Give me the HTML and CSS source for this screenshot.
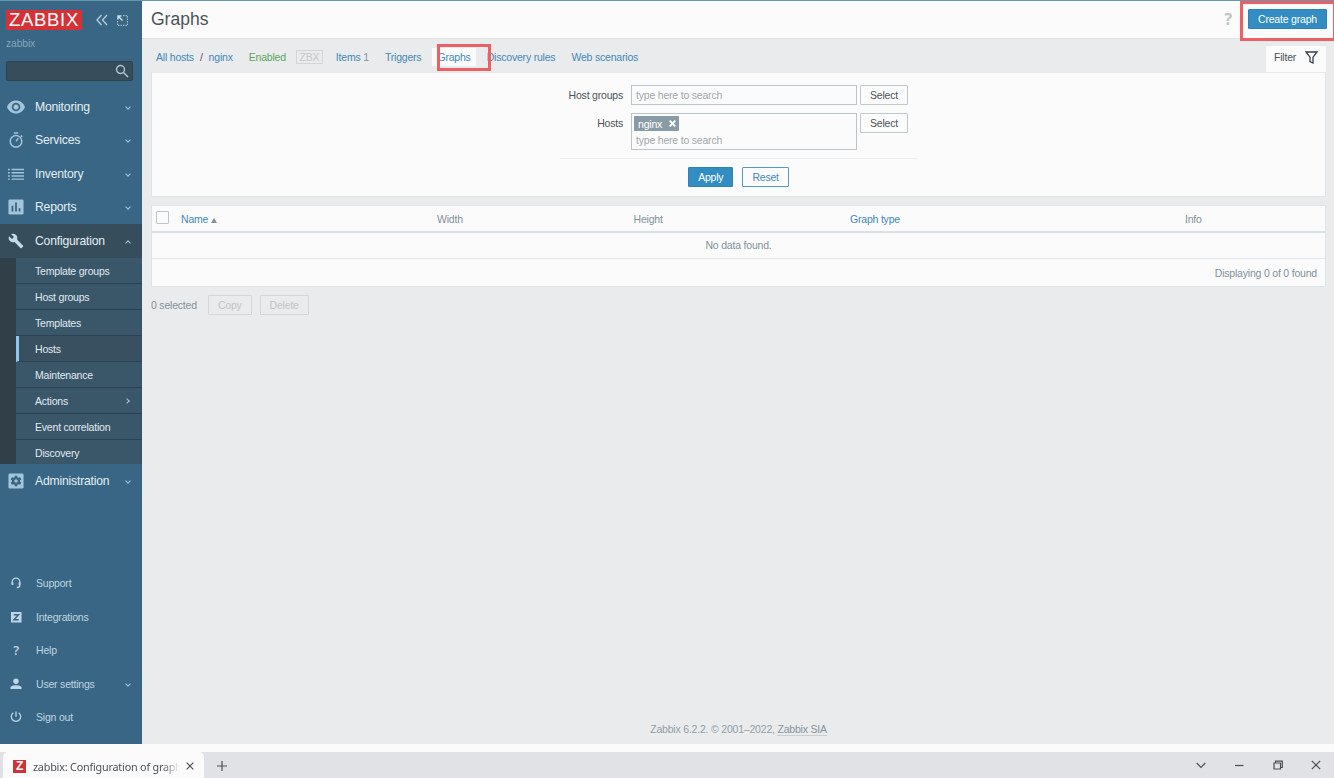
FILE: index.html
```
<!DOCTYPE html>
<html lang="en">

<head>
    <meta charset="utf-8">
    <title>zabbix: Configuration of graphs</title>
    <link rel="stylesheet" href="styles.css">
</head>

<body>
    <div class="window">
        <aside class="sidebar">
            <div class="brand">
                <div class="logo"><span>ZABBIX</span></div>
                <svg class="collapse" width="12" height="12" viewBox="0 0 12 12"><path d="M5.500 1L1 6l4.500 5M11 1L6.500 6l4.500 5"/></svg>
                <svg class="kiosk" width="11" height="11" viewBox="0 0 11 11">
                    <path class="dots" d="M6 .5h4.500v10H.500V6"/>
                    <path d="M1 4.500V1h3.500M1 1l4.500 4.500"/>
                </svg>
            </div>
            <div class="server">zabbix</div>
            <div class="search">
                <svg width="14" height="14" viewBox="0 0 14 14"><circle cx="5.500" cy="5.500" r="4"/><path d="M8.500 8.500l4.500 4.500"/></svg>
            </div>

            <nav class="menu">
                <a class="item">
                    <svg class="icon eye" viewBox="0 0 18 18"><path fill-rule="evenodd" d="M9 2.500C5 2.500 1.500 5 0 9c1.500 4 5 6.500 9 6.500s7.500-2.500 9-6.500c-1.500-4-5-6.500-9-6.500zM9 13.300a4.300 4.300 0 1 1 0-8.600 4.300 4.300 0 0 1 0 8.600z"/><circle cx="9" cy="9" r="2.500"/></svg>
                    <span>Monitoring</span><i class="arrow"></i>
                </a>
                <a class="item">
                    <svg class="icon line" viewBox="0 0 18 18"><circle cx="9" cy="10.500" r="6.500"/><path d="M6.500 1.200h5M9 10.500l2.500-3.500M14.500 4l1.500 1.500"/></svg>
                    <span>Services</span><i class="arrow"></i>
                </a>
                <a class="item">
                    <svg class="icon" viewBox="0 0 18 18"><path d="M0 3h2v1.800H0zM4 3h14v1.800H4zM0 6.700h2v1.800H0zM4 6.700h14v1.800H4zM0 10.400h2v1.800H0zM4 10.400h14v1.800H4zM0 14h2v1.500H0zM4 14h14v1.500H4z"/></svg>
                    <span>Inventory</span><i class="arrow"></i>
                </a>
                <a class="item">
                    <svg class="icon" viewBox="0 0 18 18"><rect x=".5" y=".5" width="17" height="17" rx="1.500"/><path class="cut" d="M4 7.500h2V14H4zM8 4h2v10H8zM12 10.500h2V14h-2z"/></svg>
                    <span>Reports</span><i class="arrow"></i>
                </a>
                <a class="item open">
                    <svg class="icon" viewBox="0 0 24 24"><path d="M22.700 19l-9.100-9.100c.9-2.300.4-5-1.500-6.900-2-2-5-2.400-7.400-1.300L9 6 6 9 1.600 4.700C.4 7.100.9 10.100 2.900 12.100c1.900 1.900 4.600 2.400 6.900 1.500l9.100 9.100c.4.4 1 .4 1.400 0l2.300-2.300c.5-.4.5-1.100.1-1.400z"/></svg>
                    <span>Configuration</span><i class="arrow up"></i>
                </a>
                <div class="submenu">
                    <a>Template groups</a>
                    <a>Host groups</a>
                    <a>Templates</a>
                    <a class="current">Hosts</a>
                    <a>Maintenance</a>
                    <a>Actions<i class="arrow right"></i></a>
                    <a>Event correlation</a>
                    <a>Discovery</a>
                </div>
                <a class="item">
                    <svg class="icon" viewBox="0 0 18 18"><rect x=".5" y=".5" width="17" height="17" rx="1.500"/><path class="cut" d="M7.700 3h2.600l.4 1.800 1.100.6 1.800-.6 1.300 2.200-1.400 1.300v1.400l1.400 1.300-1.300 2.200-1.800-.6-1.100.6-.4 1.800H7.700l-.4-1.800-1.100-.6-1.800.6L3.100 11l1.400-1.300V8.300L3.100 7l1.300-2.200 1.800.6 1.100-.6z"/><circle cx="9" cy="9" r="1.900"/></svg>
                    <span>Administration</span><i class="arrow"></i>
                </a>
            </nav>

            <nav class="menu user">
                <a class="item">
                    <svg class="icon line" viewBox="0 0 12 12"><path d="M2.200 7V5a3.800 3.800 0 0 1 7.600 0v3.500c0 1.300-1 2-3 2"/><path class="thick" d="M2.500 5.500v2.500M9.500 5.500v2.500"/></svg>
                    <span>Support</span>
                </a>
                <a class="item">
                    <svg class="icon" viewBox="0 0 12 12"><rect x="1" y="1" width="10.500" height="10.500"/><path class="zed" d="M3.800 3.700h4.700L4 8.800h4.700"/></svg>
                    <span>Integrations</span>
                </a>
                <a class="item"><b class="icon">?</b><span>Help</span></a>
                <a class="item">
                    <svg class="icon" viewBox="0 0 12 12"><circle cx="6" cy="3.300" r="2.700"/><path d="M.5 11V9.500C.5 8 3.500 7.200 6 7.200s5.500.8 5.500 2.300V11z"/></svg>
                    <span>User settings</span><i class="arrow"></i>
                </a>
                <a class="item">
                    <svg class="icon line" viewBox="0 0 12 12"><path d="M6 .5v5.300M3.300 1.800a4.700 4.700 0 1 0 5.400 0"/></svg>
                    <span>Sign out</span>
                </a>
            </nav>
        </aside>

        <main class="page">
            <header class="header">
                <h1>Graphs</h1>
                <span class="help">?</span>
                <button class="btn primary create">Create graph</button>
            </header>

            <div class="tabs">
                <a>All hosts</a><span class="slash">/</span><a class="host">nginx</a>
                <span class="enabled">Enabled</span>
                <span class="zbx">ZBX</span>
                <a class="items">Items <sup>1</sup></a>
                <a class="triggers">Triggers</a>
                <a class="graphs">Graphs</a>
                <a class="discovery">Discovery rules</a>
                <a>Web scenarios</a>
                <div class="filter-tab">Filter
                    <svg width="13" height="13" viewBox="0 0 13 13"><path d="M1 1h11L8 6.200V12L5 10.500V6.200z"/></svg>
                </div>
            </div>

            <section class="filter">
                <div class="row">
                    <label>Host groups</label>
                    <div class="field"><span class="hint">type here to search</span></div>
                    <button class="btn select">Select</button>
                </div>
                <div class="row">
                    <label>Hosts</label>
                    <div class="field multi">
                        <span class="tag">nginx<svg width="7" height="7" viewBox="0 0 7 7"><path d="M.7.7l5.600 5.600M6.300.7L.7 6.300"/></svg></span>
                        <span class="hint">type here to search</span>
                    </div>
                    <button class="btn select">Select</button>
                </div>
                <div class="actions">
                    <button class="btn primary">Apply</button>
                    <button class="btn outline">Reset</button>
                </div>
            </section>

            <section class="table">
                <div class="thead">
                    <span class="checkbox"></span>
                    <a>Name <i class="sort"></i></a>
                    <span>Width</span>
                    <span>Height</span>
                    <a>Graph type</a>
                    <span>Info</span>
                </div>
                <div class="nodata">No data found.</div>
                <div class="total">Displaying 0 of 0 found</div>
            </section>

            <div class="bulk">
                <span>0 selected</span>
                <button class="btn disabled">Copy</button>
                <button class="btn disabled">Delete</button>
            </div>

            <footer>Zabbix 6.2.2. © 2001–2022, <a>Zabbix SIA</a></footer>
        </main>
        <div class="mark mark-graphs"></div>
        <div class="mark mark-create"></div>
    </div>

    <div class="browser">
        <div class="browser-tab">
            <span class="favicon">Z</span>
            <span class="title">zabbix: Configuration of graph</span>
            <svg width="8" height="8" viewBox="0 0 8 8"><path d="M.7.7l6.600 6.600M7.300.7L.7 7.300"/></svg>
        </div>
        <svg class="plus" width="10" height="10" viewBox="0 0 10 10"><path d="M5 0v10M0 5h10"/></svg>
        <div class="controls">
            <svg width="10" height="10" viewBox="0 0 10 10"><path d="M.7 3L5 7.300 9.300 3"/></svg>
            <svg width="10" height="10" viewBox="0 0 10 10"><path d="M1 5.500h8.500"/></svg>
            <svg width="10" height="10" viewBox="0 0 10 10"><path d="M1 3h6.500v6H1zM2.500 3V1.200h6.800v6.300H7.500"/></svg>
            <svg width="10" height="10" viewBox="0 0 10 10"><path d="M.8.8l8.400 8.400M9.200.8L.8 9.200"/></svg>
        </div>
    </div>
</body>

</html>
```

FILE: styles.css
```
* {
    box-sizing: border-box;
}

body {
    margin: 0;
    width: 1334px;
    height: 778px;
    overflow: hidden;
    background: #fbfbfb;
    font-family: "Liberation Sans", Arial, sans-serif;
    font-size: 10.5px;
    letter-spacing: -0.2px;
    color: #4b5359;
}

svg {
    display: block;
    flex: none;
    fill: none;
}

a {
    color: #4289b8;
}

.window {
    position: relative;
    display: flex;
    height: 744px;
    border-top: 1px solid #6498b0;
}

/* sidebar */
.sidebar {
    display: flex;
    flex-direction: column;
    flex: none;
    width: 142px;
    padding-top: 9px;
    background: #396684;
}

.brand {
    display: flex;
    align-items: center;
    height: 20px;
    padding-left: 6px;
}

.logo {
    display: flex;
    align-items: center;
    justify-content: center;
    width: 76px;
    height: 20px;
    background: #d63137;
    color: #fff;
    font-size: 18.5px;
    letter-spacing: .7px;
}

.collapse {
    margin-left: 14px;
    stroke: #b5cfe0;
    stroke-width: 1.3;
}

.kiosk {
    margin-left: 9px;
    stroke: #c9dce8;
    stroke-width: 1.5;
}

.dots {
    stroke: #9bb9cc;
    stroke-width: 1.3;
    stroke-dasharray: 1.5 1;
}

.server {
    padding: 8px 6px 0;
    height: 31px;
    font-size: 10.3px;
    letter-spacing: -.1px;
    color: #83a5bb;
}

.search {
    display: flex;
    align-items: center;
    justify-content: flex-end;
    width: 127px;
    height: 20px;
    margin-left: 6px;
    padding-right: 3px;
    background: #374d5b;
    border: 1px solid #2c4250;
    border-radius: 2px;
}

.search svg {
    stroke: #aec5d3;
    stroke-width: 1.4;
}

.menu {
    margin-top: 9px;
}

.item {
    display: flex;
    align-items: center;
    height: 33.5px;
    padding: 0 10px 0 8px;
    color: #e3eef5;
    font-size: 12.2px;
}

.item span {
    flex: 1;
}

.icon {
    width: 16px;
    height: 16px;
    margin-right: 11px;
    fill: #a3c4d9;
}

.icon.eye {
    width: 18px;
    height: 18px;
    margin: 0 10px 0 -1px;
}

.icon.line {
    fill: none;
    stroke: #a3c4d9;
    stroke-width: 1.7;
}

.cut {
    fill: #396684;
}

.arrow {
    width: 4px;
    height: 4px;
    margin: 0 2px 0 0;
    border: solid #a6c5d8;
    border-width: 0 1px 1px 0;
    transform: rotate(45deg);
}

.arrow.up {
    margin-top: 4px;
    transform: rotate(225deg);
}

.arrow.right {
    margin: 0 3px 0 auto;
    transform: rotate(-45deg);
}

.open {
    background: #364d5b;
}

.open .icon {
    fill: #c3dbe9;
}

.submenu {
    height: 206.5px;
    border-left: 16px solid #303f48;
    background: #3a576a;
    overflow: hidden;
}

.submenu a {
    display: flex;
    align-items: center;
    height: 26px;
    padding: 1px 10px 0 19px;
    border-bottom: 1px solid #2d4351;
    color: #e0eaf0;
    font-size: 10.5px;
}

.submenu a.current {
    padding-left: 16px;
    border-left: 3px solid #8ec7ec;
    background: #38505f;
}

.menu.user {
    margin-top: auto;
    margin-bottom: 10px;
}

.user .item {
    padding-left: 10px;
    color: #bfd5e2;
    font-size: 10.5px;
}

.user .icon {
    width: 12px;
    height: 12px;
    margin-right: 14px;
    fill: #bed6e5;
    line-height: 12px;
    text-align: center;
    font-family: "Open Sans", sans-serif;
    font-size: 13px;
    font-weight: 600;
}

.user .icon.line {
    fill: none;
    stroke: #bed6e5;
    stroke-width: 1.3;
}

.user .thick {
    stroke-width: 1.8;
}

.zed {
    fill: none;
    stroke: #396684;
    stroke-width: 1.5;
}

/* page */
.page {
    flex: 1;
    display: flex;
    flex-direction: column;
    padding: 0 8px 0 9px;
    background: #eaebed;
}

.header {
    display: flex;
    align-items: center;
    height: 38px;
    margin: 0 -8px 0 -9px;
    padding: 0 7px 1px 9px;
    background: #fbfbfb;
    border-bottom: 1px solid #dfe2e4;
}

.header h1 {
    flex: 1;
    margin: 0;
    font-size: 17.5px;
    font-weight: normal;
    letter-spacing: 0;
}

.help {
    margin-right: 16px;
    color: #bfc3c5;
    font-family: "Open Sans", sans-serif;
    font-size: 16px;
    font-weight: bold;
}

.btn {
    height: 20px;
    padding: 0 9px;
    background: #fbfbfb;
    border: 1px solid #bfc9cd;
    border-radius: 1px;
    font: inherit;
    letter-spacing: inherit;
    line-height: 17px;
    color: #4b5359;
}

.select {
    width: 48px;
}

.primary {
    background: #338dc3;
    border-color: #2d83b7;
    color: #fff;
}

.outline {
    border-color: #5299c5;
    color: #4289b8;
}

.create {
    width: 79px;
    padding: 0;
}

.tabs {
    display: flex;
    align-items: center;
    height: 33px;
    padding: 2px 0 0 5px;
}

.slash {
    margin: 0 6px;
}

.enabled {
    margin-left: 16px;
    color: #5ca561;
}

.zbx {
    width: 27px;
    margin-left: 10px;
    border: 1px solid #d2d5d7;
    color: #c3c7c9;
    line-height: 12px;
    text-align: center;
}

.items {
    margin-left: 13px;
}

.items sup {
    color: #84939b;
    font-size: inherit;
    vertical-align: baseline;
}

.triggers {
    margin-left: 16px;
}

.graphs {
    margin: 0 6px 0 11px;
    padding: 3px 5px;
    background: #fbfbfb;
}

.discovery {
    margin: 0 16px 0 5px;
}

.filter-tab {
    display: flex;
    align-items: center;
    align-self: flex-end;
    gap: 9px;
    width: 60px;
    height: 26px;
    margin-left: auto;
    padding: 0 0 4px 8px;
    background: #fbfbfb;
}

.filter-tab svg {
    stroke: #384046;
    stroke-width: 1.3;
}

.filter {
    height: 125px;
    padding-top: 12px;
    background: #fbfbfb;
    border: 1px solid #e0e4e6;
    border-top-color: #e5e8ea;
}

.row {
    display: flex;
    gap: 3px;
    margin-bottom: 8px;
}

.row label {
    width: 471px;
    margin-right: 5px;
    line-height: 21px;
    height: 20px;
    text-align: right;
}

.field {
    display: flex;
    flex-direction: column;
    width: 226px;
    height: 20px;
    padding-left: 2px;
    border: 1px solid #b9c5ca;
}

.hint {
    padding-left: 2px;
    color: #a3a8ab;
    line-height: 19px;
}

.multi {
    height: 37px;
    padding-top: 2px;
}

.tag {
    display: flex;
    align-items: center;
    flex: none;
    width: 45px;
    height: 15px;
    padding-left: 4px;
    gap: 7px;
    border-radius: 1px;
    background: #899ba5;
    color: #fff;
}

.tag svg {
    stroke: #fff;
    stroke-width: 1.8;
}

.actions {
    display: flex;
    justify-content: center;
    gap: 9px;
    width: 357px;
    margin: 0 auto;
    padding-top: 8px;
    border-top: 1px solid #eceeef;
}

.table {
    height: 82px;
    margin-top: 8px;
    background: #fbfbfb;
    border: 1px solid #e0e4e6;
    color: #82919a;
}

.thead {
    display: grid;
    grid-template-columns: 25px 256px 196.5px 216.5px 335px 1fr;
    align-items: center;
    height: 27px;
    padding: 1px 0 0 4px;
    border-bottom: 2px solid #dce0e2;
}

.checkbox {
    width: 13px;
    height: 13px;
    margin-top: -3px;
    border: 1px solid #bdc6cb;
    border-radius: 1px;
}

.sort {
    display: inline-block;
    border: solid transparent;
    border-width: 0 3.5px 5px;
    border-bottom-color: #81929c;
}

.nodata {
    height: 26px;
    line-height: 25px;
    text-align: center;
    border-bottom: 1px solid #e5e8ea;
}

.total {
    padding-right: 8px;
    line-height: 28px;
    text-align: right;
}

.bulk {
    display: flex;
    align-items: center;
    gap: 8px;
    margin-top: 8px;
    color: #82919a;
}

.bulk span {
    margin-right: 3px;
}

.disabled {
    background: transparent;
    border-color: #d3d7d9;
    color: #bfc5c8;
}

footer {
    margin-top: auto;
    padding-bottom: 9px;
    color: #929ea5;
    text-align: center;
}

footer a {
    color: #84939b;
    border-bottom: 1px solid #c7cdd1;
}

/* red frames laid over the page */
.mark {
    position: absolute;
    border: 3px solid #ec5f62;
}

.mark-graphs {
    left: 437px;
    top: 43px;
    width: 54px;
    height: 27px;
}

.mark-create {
    left: 1240px;
    top: 0;
    width: 96px;
    height: 40px;
}

/* browser tab strip */
.browser {
    display: flex;
    align-items: center;
    height: 26px;
    margin-top: 8px;
    background: #e0e2e6;
    font-family: "Noto Sans", sans-serif;
    font-size: 10.8px;
}

.browser svg {
    stroke: #4c4f52;
    stroke-width: 1.2;
}

.browser-tab {
    display: flex;
    align-items: center;
    width: 201px;
    height: 26px;
    margin-left: 3px;
    padding: 2px 10px 0 10px;
    background: #fbfbfb;
    border-radius: 5px 5px 0 0;
}

.favicon {
    width: 13px;
    height: 13px;
    background: #d23237;
    color: #fff;
    font: bold 12px/13px "Liberation Sans", sans-serif;
    text-align: center;
}

.title {
    width: 147px;
    margin: 0 6px 0 7px;
    white-space: nowrap;
    -webkit-mask-image: linear-gradient(to right, #000 88%, transparent);
    mask-image: linear-gradient(to right, #000 88%, transparent);
}

.plus {
    margin: 2px 0 0 13px;
}

.controls {
    display: flex;
    gap: 28.500px;
    margin-left: auto;
    padding-right: 13px;
}
```
